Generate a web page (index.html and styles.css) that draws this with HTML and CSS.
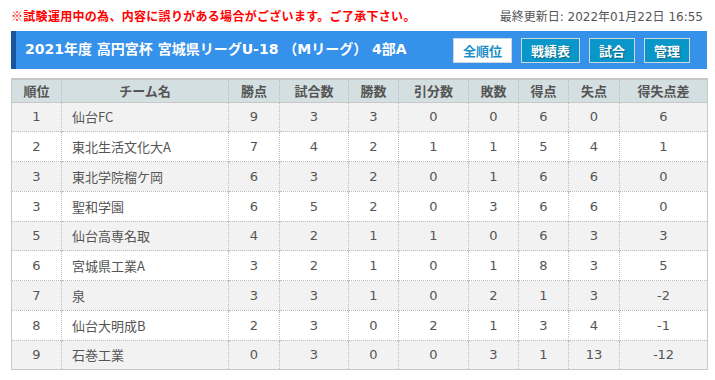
FILE: index.html
```html
<!DOCTYPE html>
<html lang="ja">
<head>
<meta charset="utf-8">
<title>順位表</title>
<link rel="stylesheet" href="styles.css">
</head>
<body>
<div class="page">
  <div class="topline">
    <span class="notice">※試験運用中の為、内容に誤りがある場合がございます。ご了承下さい。</span>
    <span class="updated">最終更新日: 2022年01月22日 16:55</span>
  </div>
  <div class="bar">
    <h1 class="title">2021年度 高円宮杯 宮城県リーグU-18 （Mリーグ） 4部A</h1>
    <nav class="btns">
      <a class="btn btn-active">全順位</a>
      <a class="btn">戦績表</a>
      <a class="btn">試合</a>
      <a class="btn">管理</a>
    </nav>
  </div>
  <table class="standings">
    <colgroup>
      <col class="c1"><col class="c2"><col class="c3"><col class="c4"><col class="c5">
      <col class="c6"><col class="c7"><col class="c8"><col class="c9"><col class="c10">
    </colgroup>
    <thead>
      <tr><th>順位</th><th>チーム名</th><th>勝点</th><th>試合数</th><th>勝数</th><th>引分数</th><th>敗数</th><th>得点</th><th>失点</th><th>得失点差</th></tr>
    </thead>
    <tbody>
      <tr><td>1</td><td class="team">仙台FC</td><td>9</td><td>3</td><td>3</td><td>0</td><td>0</td><td>6</td><td>0</td><td>6</td></tr>
      <tr><td>2</td><td class="team">東北生活文化大A</td><td>7</td><td>4</td><td>2</td><td>1</td><td>1</td><td>5</td><td>4</td><td>1</td></tr>
      <tr><td>3</td><td class="team">東北学院榴ケ岡</td><td>6</td><td>3</td><td>2</td><td>0</td><td>1</td><td>6</td><td>6</td><td>0</td></tr>
      <tr><td>3</td><td class="team">聖和学園</td><td>6</td><td>5</td><td>2</td><td>0</td><td>3</td><td>6</td><td>6</td><td>0</td></tr>
      <tr><td>5</td><td class="team">仙台高専名取</td><td>4</td><td>2</td><td>1</td><td>1</td><td>0</td><td>6</td><td>3</td><td>3</td></tr>
      <tr><td>6</td><td class="team">宮城県工業A</td><td>3</td><td>2</td><td>1</td><td>0</td><td>1</td><td>8</td><td>3</td><td>5</td></tr>
      <tr><td>7</td><td class="team">泉</td><td>3</td><td>3</td><td>1</td><td>0</td><td>2</td><td>1</td><td>3</td><td>-2</td></tr>
      <tr><td>8</td><td class="team">仙台大明成B</td><td>2</td><td>3</td><td>0</td><td>2</td><td>1</td><td>3</td><td>4</td><td>-1</td></tr>
      <tr><td>9</td><td class="team">石巻工業</td><td>0</td><td>3</td><td>0</td><td>0</td><td>3</td><td>1</td><td>13</td><td>-12</td></tr>
    </tbody>
  </table>
</div>
</body>
</html>
```
FILE: styles.css
```css
* { box-sizing: border-box; }
html, body { margin: 0; padding: 0; background: #fff; }
body {
  font-family: "DejaVu Sans", "Noto Sans CJK JP", sans-serif;
  color: #555;
}
.page {
  padding: 0 8px 0 11px;
}
.topline {
  height: 31px;
  display: flex;
  align-items: center;
  justify-content: space-between;
  padding-right: 4px;
}
.notice {
  color: #f00;
  font-weight: bold;
  font-size: 12px;
  letter-spacing: 0.3px;
  font-family: "Noto Sans CJK JP", sans-serif;
}
.updated {
  color: #555;
  font-size: 12px;
  font-family: "DejaVu Sans", "Noto Sans CJK JP", sans-serif;
}
.bar {
  height: 38px;
  background: #3591ea;
  border-left: 5px solid #1456a0;
  display: flex;
  align-items: center;
  justify-content: space-between;
  padding: 0 17px 0 9px;
}
.title {
  margin: 0;
  color: #fff;
  font-size: 14px;
  font-weight: bold;
  font-family: "DejaVu Sans", "Noto Sans CJK JP", sans-serif;
  margin-top: -4px;
}
.btns {
  display: flex;
  gap: 9px;
  margin-top: 1px;
}
.btn {
  display: flex;
  align-items: center;
  justify-content: center;
  height: 25px;
  padding: 0 9px;
  border: 1px solid #cfd8de;
  background: #0996c9;
  color: #fff;
  font-size: 13px;
  font-weight: bold;
  font-family: "Noto Sans CJK JP", sans-serif;
  text-shadow: 1px 1px 1px rgba(0, 0, 0, 0.35);
}
.btn-active {
  background: #fff;
  color: #1a8fc9;
  text-shadow: none;
}
.standings {
  margin-top: 9px;
  width: 696px;
  border-collapse: collapse;
  table-layout: fixed;
  border: 1px solid #c8c8c8;
  border-top-width: 2px;
  font-size: 13px;
}
.c1 { width: 50px; }
.c2 { width: 167px; }
.c3 { width: 51px; }
.c4 { width: 69px; }
.c5 { width: 50px; }
.c6 { width: 70px; }
.c7 { width: 50px; }
.c8 { width: 50px; }
.c9 { width: 51px; }
.c10 { width: 88px; }
.standings th {
  background: #d3dfe0;
  color: #555;
  font-weight: bold;
  font-family: "Noto Sans CJK JP", sans-serif;
  height: 23px;
  padding: 0;
  text-align: center;
  border-left: 1px dotted #bdbdbd;
  border-bottom: 1px solid #c8c8c8;
}
.standings td {
  height: 29.75px;
  padding: 0;
  text-align: center;
  color: #555;
  border-left: 1px dotted #bdbdbd;
  border-top: 1px dotted #bdbdbd;
}
.standings th:first-child, .standings td:first-child { border-left: none; }
.standings tbody tr:first-child td { border-top: none; }
.standings tbody tr:nth-child(odd) td { background: #f2f2f2; }
.standings td.team {
  text-align: left;
  padding-left: 10px;
  font-family: "Noto Sans CJK JP", sans-serif;
}
```
